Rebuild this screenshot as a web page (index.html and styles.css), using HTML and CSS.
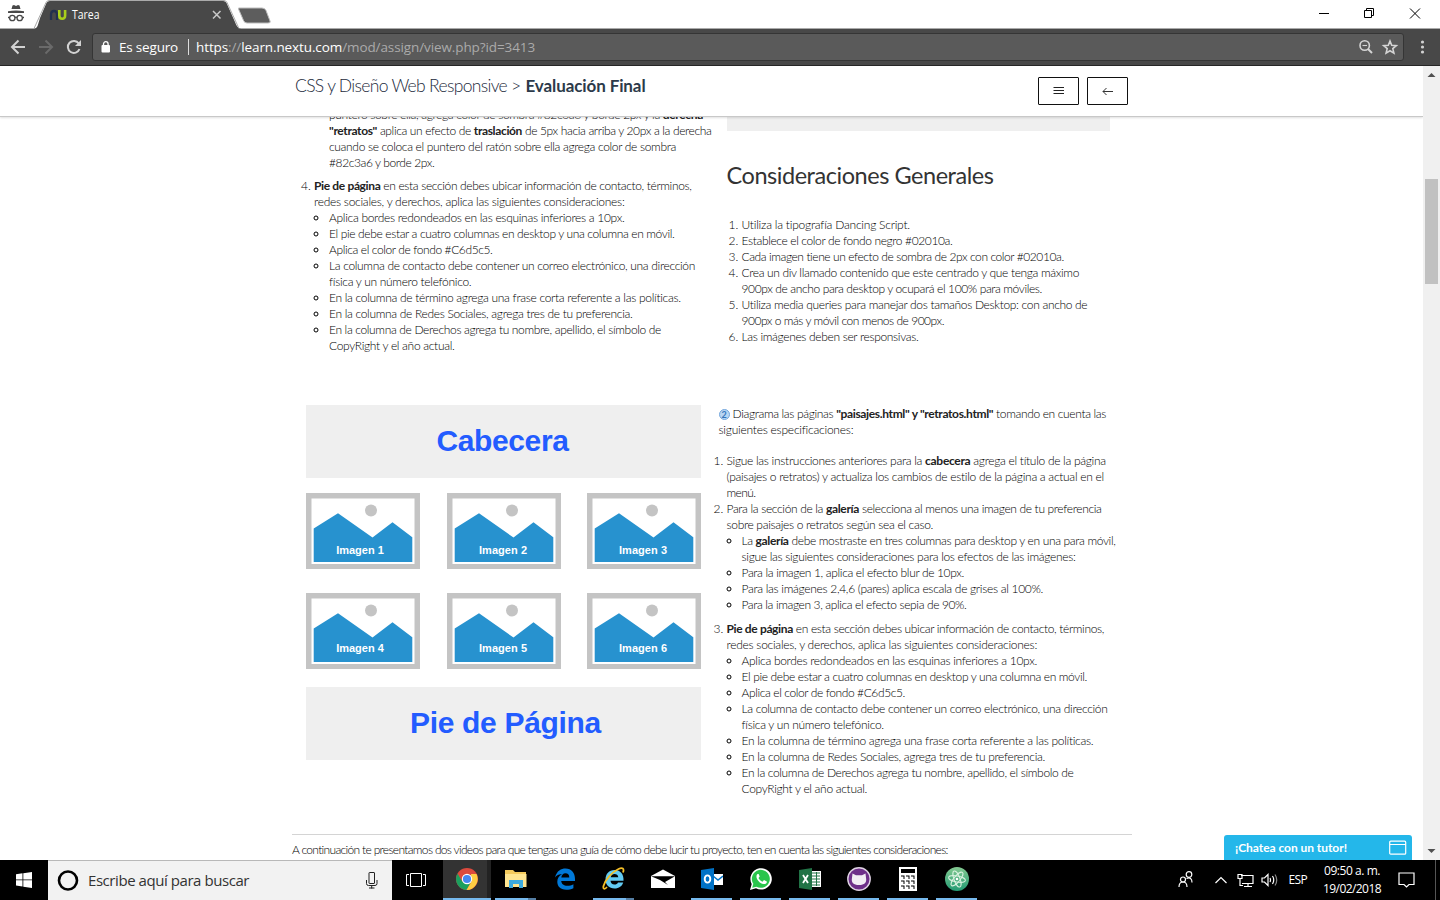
FILE: index.html
```html
<!DOCTYPE html>
<html lang="es">
<head>
<meta charset="utf-8">
<title>Tarea</title>
<link rel="stylesheet" href="styles.css">
</head>
<body>
<svg class="defs" width="0" height="0">
  <symbol id="thumb" viewBox="0 0 114 76">
    <rect width="114" height="76" fill="#c4c4c4"/>
    <rect x="5.5" y="5.5" width="103" height="65.5" fill="#fff"/>
    <circle cx="65" cy="17.5" r="6" fill="#c4c4c4"/>
    <path d="M7.7 35.5 32 20.3 66.5 44.5 86.5 29.3 106.3 44.3V69H7.7z" fill="#2792cf"/>
  </symbol>
</svg>

<div class="tabstrip">
  <svg class="tabs" width="290" height="29" viewBox="0 0 290 29">
    <path d="M34 29C38 28 38 24 40 18L46 4Q47 1 50 1H223Q226 1 227 4L235 22Q237 28 241 29z" fill="#484848"/>
    <path d="M34 28.5 46 2.5Q47 .5 49 .5H224Q226 .5 227 2.500L239 28.500" fill="none" stroke="#aaa"/>
    <path d="M238.500 8H262Q265 8 266 10.500L270 21Q271 23 268 23H247Q244.500 23 243.500 20.500L238.500 9z" fill="#5d5d5d" stroke="#bdbdbd"/>
    <g fill="#484848"><path d="M12.500 5.500 14 5 16 6 18 5 19.500 5.500 20.500 9h-9zM8 11.300Q16 9.500 24 11.300V13H8z"/></g>
    <g fill="none" stroke="#484848" stroke-width="1.300"><circle cx="12.300" cy="18" r="2.700"/><circle cx="19.700" cy="18" r="2.700"/><path d="M15 17.500q1-.7 2 0M9 17.500H8M23 17.500h1"/></g>
    <path d="M51 20v-5q0-4 3-4t3 4v5" fill="none" stroke="#22304f" stroke-width="2.300"/>
    <path d="M59.300 10v5.500q0 3.300 2.900 3.300t2.900-3.300V10" fill="none" stroke="#a9cf1b" stroke-width="2.600"/>
    <path d="m213 11 7.500 7.500m0-7.500-7.500 7.500" stroke="#c9c9c9" stroke-width="1.500"/>
    <text x="72" y="19" class="tab-title" textLength="27.500" lengthAdjust="spacingAndGlyphs">Tarea</text>
  </svg>
  <svg class="winctl" width="120" height="28" viewBox="0 0 120 28" fill="none" stroke="#000">
    <path d="M-1 13.500h10M44.500 10.500h7v7h-7zM46.500 10.500v-2h7v7h-2M90 8.500l10 10m0-10-10 10"/>
  </svg>
</div>

<div class="toolbar">
  <svg class="nav" width="92" height="36" viewBox="0 0 92 36" fill="none" stroke="#d2d2d2" stroke-width="2">
    <path d="M25 18H12M18.500 11.500 12 18l6.500 6.500"/>
    <path d="M39 18h13M45.500 11.500 52 18l-6.500 6.500" stroke="#6a6a6a"/>
    <path d="M78.800 14.500A6 6 0 1 0 79.500 20"/><path d="M81 11v6h-6z" fill="#d2d2d2" stroke="none"/>
  </svg>
  <div class="omnibox">
    <svg width="12" height="14" viewBox="0 0 12 14"><rect x="1.500" y="5" width="8.500" height="7.500" rx="1" fill="#fff"/><path d="M3.500 6V4a2.300 2.300 0 0 1 4.600 0v2" fill="none" stroke="#fff" stroke-width="1.300"/></svg>
    <span class="secure"><span class="fit" data-w="59">Es seguro</span></span>
    <span class="url"><span class="fit" data-w="339">https<i>://</i>learn.nextu.com<i>/mod/assign/view.php?id=3413</i></span></span>
    <svg class="omni-icons" width="42" height="16" viewBox="0 0 42 16" fill="none" stroke="#d4d4d4" stroke-width="1.600"><circle cx="6.700" cy="6.500" r="4.700"/><path d="m10 10 4 4" stroke-width="2"/><path d="M4.500 6.500h4.500" stroke-width="1.100"/><path d="m32 2 1.700 4.300 4.600.3-3.500 3 1.100 4.500-3.900-2.400-3.900 2.400 1.100-4.500-3.500-3 4.600-.3z"/></svg>
  </div>
  <svg class="menu" width="24" height="36" viewBox="0 0 24 36" fill="#d2d2d2"><circle cx="6.500" cy="13" r="1.600"/><circle cx="6.500" cy="18" r="1.600"/><circle cx="6.500" cy="23" r="1.600"/></svg>
</div>

<div class="viewport">
  <div class="page">
    <header class="course">
      <div class="crumbs"><span class="fit" data-w="225.500">CSS y Diseño Web Responsive &gt;</span><span class="fit current" data-w="120">Evaluación Final</span></div>
      <div class="btn"><svg width="12" height="12" viewBox="0 0 12 12" stroke="#222"><path d="M.5 2.500h10.500M.5 5.500h10.500M.5 8.500h10.500"/></svg></div>
      <div class="btn"><svg width="12" height="12" viewBox="0 0 12 12" fill="none" stroke="#333"><path d="M11 6.500H1M4.500 3 1 6.500 4.500 10"/></svg></div>
    </header>
    <main class="content">
      <div class="row first">
        <section class="col-left">
          <ul class="cont">
            <li><span class="fit" data-w="374">puntero sobre ella, agrega color de sombra #82c3a6 y borde 2px y la <b>derecha</b></span>
            <span class="fit" data-w="382.500"><b>"retratos"</b> aplica un efecto de <b>traslación</b> de 5px hacia arriba y 20px a la derecha</span>
            <span class="fit" data-w="347">cuando se coloca el puntero del ratón sobre ella agrega color de sombra</span>
            <span class="fit" data-w="105.500">#82c3a6 y borde 2px.</span></li>
          </ul>
          <ol start="4">
            <li><span class="fit" data-w="377.500"><b>Pie de página</b> en esta sección debes ubicar información de contacto, términos,</span>
            <span class="fit" data-w="310.500">redes sociales, y derechos, aplica las siguientes consideraciones:</span>
              <ul>
                <li><span class="fit" data-w="295.500">Aplica bordes redondeados en las esquinas inferiores a 10px.</span></li>
                <li><span class="fit" data-w="345.500">El pie debe estar a cuatro columnas en desktop y una columna en móvil.</span></li>
                <li><span class="fit" data-w="163.500">Aplica el color de fondo #C6d5c5.</span></li>
                <li><span class="fit" data-w="366">La columna de contacto debe contener un correo electrónico, una dirección</span>
                <span class="fit" data-w="142">física y un número telefónico.</span></li>
                <li><span class="fit" data-w="352">En la columna de término agrega una frase corta referente a las políticas.</span></li>
                <li><span class="fit" data-w="303.500">En la columna de Redes Sociales, agrega tres de tu preferencia.</span></li>
                <li><span class="fit" data-w="332">En la columna de Derechos agrega tu nombre, apellido, el símbolo de</span>
                <span class="fit" data-w="125.500">CopyRight y el año actual.</span></li>
              </ul>
            </li>
          </ol>
        </section>
        <section class="col-right">
          <div class="block-end"></div>
          <h2><span class="fit" data-w="267">Consideraciones Generales</span></h2>
          <ol>
            <li><span class="fit" data-w="168.500">Utiliza la tipografía Dancing Script.</span></li>
            <li><span class="fit" data-w="211">Establece el color de fondo negro #02010a.</span></li>
            <li><span class="fit" data-w="322.500">Cada imagen tiene un efecto de sombra de 2px con color #02010a.</span></li>
            <li><span class="fit" data-w="337.500">Crea un div llamado contenido que este centrado y que tenga máximo</span>
            <span class="fit" data-w="300.500">900px de ancho para desktop y ocupará el 100% para móviles.</span></li>
            <li><span class="fit" data-w="346">Utiliza media queries para manejar dos tamaños Desktop: con ancho de</span>
            <span class="fit" data-w="202.500">900px o más y móvil con menos de 900px.</span></li>
            <li><span class="fit" data-w="177">Las imágenes deben ser responsivas.</span></li>
          </ol>
        </section>
      </div>
      <div class="row second">
        <section class="mock">
          <div class="band"><span class="fit" data-w="132">Cabecera</span></div>
          <div class="thumbs">
            <svg viewBox="0 0 114 76"><use href="#thumb"/><text x="54" y="61" textLength="47.500">Imagen 1</text></svg>
            <svg viewBox="0 0 114 76"><use href="#thumb"/><text x="56" y="61" textLength="48">Imagen 2</text></svg>
            <svg viewBox="0 0 114 76"><use href="#thumb"/><text x="56" y="61" textLength="48">Imagen 3</text></svg>
            <svg viewBox="0 0 114 76"><use href="#thumb"/><text x="54" y="59" textLength="47.500">Imagen 4</text></svg>
            <svg viewBox="0 0 114 76"><use href="#thumb"/><text x="56" y="59" textLength="48">Imagen 5</text></svg>
            <svg viewBox="0 0 114 76"><use href="#thumb"/><text x="56" y="59" textLength="48">Imagen 6</text></svg>
          </div>
          <div class="band foot"><span class="fit" data-w="191">Pie de Página</span></div>
        </section>
        <section class="task">
          <p><span class="lead"><span class="num">2</span><span class="fit" data-w="373.500">Diagrama las páginas <b>"paisajes.html" y "retratos.html"</b> tomando en cuenta las</span></span>
          <span class="fit" data-w="134.500">siguientes especificaciones:</span></p>
          <ol>
            <li><span class="fit" data-w="379.500">Sigue las instrucciones anteriores para la <b>cabecera</b> agrega el título de la página</span>
            <span class="fit" data-w="377.500">(paisajes o retratos) y actualiza los cambios de estilo de la página a actual en el</span>
            <span class="fit" data-w="29">menú.</span></li>
            <li><span class="fit" data-w="375">Para la sección de la <b>galería</b> selecciona al menos una imagen de tu preferencia</span>
            <span class="fit" data-w="206.500">sobre paisajes o retratos según sea el caso.</span>
              <ul>
                <li><span class="fit" data-w="374">La <b>galería</b> debe mostraste en tres columnas para desktop y en una para móvil,</span>
                <span class="fit" data-w="334">sigue las siguientes consideraciones para los efectos de las imágenes:</span></li>
                <li><span class="fit" data-w="222.500">Para la imagen 1, aplica el efecto blur de 10px.</span></li>
                <li><span class="fit" data-w="301.500">Para las imágenes 2,4,6 (pares) aplica escala de grises al 100%.</span></li>
                <li><span class="fit" data-w="225">Para la imagen 3, aplica el efecto sepia de 90%.</span></li>
              </ul>
            </li>
            <li class="gap"><span class="fit" data-w="377.500"><b>Pie de página</b> en esta sección debes ubicar información de contacto, términos,</span>
            <span class="fit" data-w="310.500">redes sociales, y derechos, aplica las siguientes consideraciones:</span>
              <ul>
                <li><span class="fit" data-w="295.500">Aplica bordes redondeados en las esquinas inferiores a 10px.</span></li>
                <li><span class="fit" data-w="345.500">El pie debe estar a cuatro columnas en desktop y una columna en móvil.</span></li>
                <li><span class="fit" data-w="163.500">Aplica el color de fondo #C6d5c5.</span></li>
                <li><span class="fit" data-w="366">La columna de contacto debe contener un correo electrónico, una dirección</span>
                <span class="fit" data-w="142">física y un número telefónico.</span></li>
                <li><span class="fit" data-w="352">En la columna de término agrega una frase corta referente a las políticas.</span></li>
                <li><span class="fit" data-w="303.500">En la columna de Redes Sociales, agrega tres de tu preferencia.</span></li>
                <li><span class="fit" data-w="332">En la columna de Derechos agrega tu nombre, apellido, el símbolo de</span>
                <span class="fit" data-w="125.500">CopyRight y el año actual.</span></li>
              </ul>
            </li>
          </ol>
        </section>
      </div>
      <div class="after"><span class="fit" data-w="656">A continuación te presentamos dos videos para que tengas una guía de cómo debe lucir tu proyecto, ten en cuenta las siguientes consideraciones:</span></div>
    </main>
    <div class="chat"><span class="fit" data-w="112">¡Chatea con un tutor!</span>
      <svg width="18" height="16" viewBox="0 0 18 16" fill="none" stroke="#fff"><rect x=".7" y="1.200" width="16" height="13" rx="1" stroke-width="1.200"/><path d="M1 4.500h16"/></svg>
    </div>
  </div>
  <div class="scrollbar">
    <svg width="17" height="17" viewBox="0 0 17 17"><path d="m4.500 11 4-4 4 4z" fill="#505050"/></svg>
    <div class="thumb"></div>
    <svg class="down" width="17" height="17" viewBox="0 0 17 17"><path d="m4.500 6 4 4 4-4z" fill="#505050"/></svg>
  </div>
</div>

<div class="taskbar">
  <div class="start"><svg width="16" height="16" viewBox="0 0 16 16" fill="#fff"><path d="M0 2.200 6.500 1.300v6.200H0zM7.300 1.200 16 0v7.500H7.300zM0 8.300h6.500v6.200L0 13.600zM7.300 8.300H16V16l-8.700-1.300z"/></svg></div>
  <div class="search">
    <svg width="22" height="22" viewBox="0 0 22 22"><circle cx="11" cy="10.500" r="9" fill="none" stroke="#000" stroke-width="2.600"/></svg>
    <span class="search-text"><span class="fit" data-w="161">Escribe aquí para buscar</span></span>
    <svg class="mic" width="12" height="17" viewBox="0 0 12 17" fill="none" stroke="#222"><rect x="3" y=".5" width="5.500" height="11" rx=".5"/><path d="M.5 8v3.500q0 2 2 2h6.500q2 0 2-2V8M5.700 13.500v3M3 16h5.500"/></svg>
  </div>
  <div class="view"><svg width="20" height="16" viewBox="0 0 20 16" fill="none" stroke="#fff"><path d="M4.500 1.500h11v13h-11zM3 2.500H.5v11H3M17 2.500h2.500v11H17"/></svg></div>
  <div class="app active"><svg width="22" height="22" viewBox="0 0 22 22"><circle cx="11" cy="11" r="11" fill="#dc4a3e"/><path d="M1.500 5.500A11 11 0 0 0 10.500 22L15.300 13.500 6.200 13.500z" fill="#1ba05e"/><path d="M20.500 6A11 11 0 0 1 10.500 22L15.500 13.500 15 6z" fill="#ffcd42"/><circle cx="11" cy="11" r="5.200" fill="#fff"/><circle cx="11" cy="11" r="4.100" fill="#4587f3"/></svg></div>
  <div class="app on stack"><svg width="22" height="20" viewBox="0 0 22 20"><path d="M0 1h8l2 2h11v15H0z" fill="#f4ca5c"/><path d="M0 5h21.500v13H0z" fill="#ffe590"/><path d="M4 19v-8h14v8h-4v-4H8v4z" fill="#3cabdf"/></svg></div>
  <div class="app"><svg width="22" height="22" viewBox="0 0 22 22"><path d="M1 9.500C3 2.500 7 .5 11.500.5 17.500.5 21 5 21 11v2H7.200c.3 3.200 2.800 4.800 6 4.800 2.600 0 4.400-.6 6.200-1.600v4c-2.300 1.200-4.700 1.600-7.100 1.600C6 21.800 3.300 18 3.300 13.800c0-3.400 1.800-5.900 4.700-7.500C4.500 6 2.500 7.300 1 9.500zM7.300 9.500h8c0-3-1.500-4.300-3.800-4.300-2.400 0-3.800 1.700-4.200 4.300z" fill="#0078d7"/></svg></div>
  <div class="app on stack"><svg width="24" height="24" viewBox="0 0 24 24"><path d="M12.500 3C7 3 3.500 7 3.500 12.500s3.700 9 9 9c4.500 0 7.700-2.400 8.700-6H16c-.7 1.500-1.800 2-3.500 2-2.400 0-3.800-1.500-4-3.700h13C22 7.500 18.500 3 12.500 3zM8.700 10.300c.5-2.200 1.900-3.300 3.900-3.300s3.400 1.100 3.700 3.300z" fill="#62caf2"/><path d="M5 20C2.500 23 .8 22 1.500 19 3 13 10 5 16.500 2c4-1.800 6-.5 4.500 3.500" fill="none" stroke="#f4bf28" stroke-width="1.800"/></svg></div>
  <div class="app"><svg width="24" height="20" viewBox="0 0 24 20"><path d="M0 7 12 .5 24 7v12H0z" fill="#fff"/><path d="M0 7.200h24L14 13l3 3-8-5z" fill="#000"/></svg></div>
  <div class="app on"><svg width="22" height="22" viewBox="0 0 22 22"><path d="M12 6h10v11H12z" fill="#fff"/><path d="m12 8 5 4 5-4" fill="none" stroke="#0072c6" stroke-width="1.500"/><path d="M0 2 13 0v22L0 20z" fill="#0072c6"/><ellipse cx="6.500" cy="11" rx="2.800" ry="3.600" fill="none" stroke="#fff" stroke-width="1.900"/></svg></div>
  <div class="app on"><svg width="22" height="22" viewBox="0 0 22 22"><path d="M0 22 1.700 16A10.700 10.700 0 1 1 6 20.300z" fill="#fff"/><path d="m2.200 19.800 1.100-4A9 9 0 1 1 6.400 18.700z" fill="#29c54c"/><path d="M7.500 6c-3 2.500.8 9 6 10 2 .3 3.800-1.200 3.300-2.500L14 12l-1.500 1.700C10.500 13 9 11.300 8.500 10L9.700 8.500 8.600 6z" fill="#fff"/></svg></div>
  <div class="app on"><svg width="22" height="22" viewBox="0 0 22 22"><path d="M12 3h10v16H12z" fill="#fff"/><path d="M13 5h8M13 8h8M13 11h8M13 14h8M13 17h8M17.500 4v14" stroke="#217346"/><path d="M0 2 13 0v22L0 20z" fill="#217346"/><path d="m4 7 5 8m0-8-5 8" stroke="#fff" stroke-width="1.800"/></svg></div>
  <div class="app on"><svg width="24" height="24" viewBox="0 0 24 24"><circle cx="12" cy="12" r="11.200" fill="#6e3089" stroke="#ded2e2" stroke-width="1.400"/><path d="M5.500 6.500 9 8.200h6l3.500-1.700.5 4.200c1 5-1.500 7.300-7 7.300s-8-2.300-7-7.300z" fill="#f2eef4"/></svg></div>
  <div class="app on"><svg width="18" height="24" viewBox="0 0 18 24"><path d="M0 0h18v24H0z" fill="#fff"/><path d="M2 2h14v4H2zM2 8.500h3.500V12h-1V9.500H2zM7 8.500h3.500V12h-1V9.500H7zM12 8.500h3.500V12h-1V9.500H12zM2 13.500h3.500V17h-1v-2.500H2zM7 13.500h3.500V17h-1v-2.500H7zM12 13.500h3.500V17h-1v-2.500H12zM2 18.500h3.500V22h-1v-2.500H2zM7 18.500h3.500V22h-1v-2.500H7zM12 18.500h3.500V22h-1v-2.500H12z"/></svg></div>
  <div class="app on"><svg width="24" height="24" viewBox="0 0 24 24"><defs><linearGradient id="ag" x2="0" y2="1"><stop stop-color="#84c991"/><stop offset="1" stop-color="#229b73"/></linearGradient></defs><circle cx="12" cy="12" r="12" fill="url(#ag)"/><g fill="none" stroke="#d9f1df"><ellipse cx="12" cy="12" rx="3" ry="8.500" transform="rotate(-20 12 12)"/><ellipse cx="12" cy="12" rx="3" ry="8.500" transform="rotate(40 12 12)"/><ellipse cx="12" cy="12" rx="3" ry="8.500" transform="rotate(100 12 12)"/></g><circle cx="12" cy="12" r="1.300" fill="#fff"/></svg></div>
  <div class="tray">
    <svg width="108" height="20" viewBox="0 0 108 20" fill="none" stroke="#fff" stroke-width="1.200"><circle cx="6" cy="9.500" r="2.500"/><path d="M2 17q0-5 4-5t4 5"/><circle cx="12" cy="4.500" r="2.800"/><path d="M9.500 8.500Q15 6.500 15 12.500M38.500 13l5.500-5.500 5.500 5.500M64 5.500h12v8H65M71 13.500v3M67 16.500h8M61 4.500h4v4h-4zM63 8.500v7h3M85 8h2.500L91 4.500v11L87.500 12H85zM93 8q1 2 0 4M95.500 6q2.500 4 0 8"/><path d="M98 4.500q3.500 5.500 0 11" stroke="#888"/></svg>
    <span class="lang"><span class="fit" data-w="18.500">ESP</span></span>
    <div class="clock"><span class="fit" data-w="56">09:50 a. m.</span><span class="fit" data-w="58">19/02/2018</span></div>
    <svg class="note" width="18" height="18" viewBox="0 0 18 18" fill="none" stroke="#fff" stroke-width="1.200"><path d="M1 2h15v11.500h-5L8.500 16 6 13.500H1z"/></svg>
    <div class="edge"></div>
  </div>
</div>
<script src="fit.js"></script>
</body>
</html>
```
FILE: styles.css
```css
* { box-sizing: border-box; }
body { margin: 0; width: 1440px; height: 900px; overflow: hidden; display: flex; flex-direction: column; background: #fff; font-family: "Open Sans", sans-serif; }
.defs { position: absolute; }
svg { display: block; flex: none; }
.fit { display: inline-block; white-space: nowrap; }

.tabstrip { height: 29px; flex: none; display: flex; justify-content: space-between; border-bottom: 1px solid #aaa; }
.tabs { height: 29px; overflow: visible; }
.tab-title { font: 12px "Open Sans", sans-serif; fill: #fff; }
.winctl { overflow: visible; }
.toolbar { height: 37px; flex: none; display: flex; background: #484848; border-bottom: 1px solid #262626; }
.omnibox { width: 1312px; height: 28px; margin-top: 4px; border: 1px solid #353535; border-radius: 3px; background: #5a5a5a; display: flex; align-items: center; padding-left: 7px; color: #fff; font-size: 13.5px; }
.secure { margin-left: 7px; width: 70px; height: 16px; line-height: 16px; border-right: 1px solid #ddd; }
.url { margin-left: 7px; line-height: 16px; }
.url i { font-style: normal; color: #aaa; }
.omni-icons { margin-left: auto; margin-right: 3px; }
.menu { margin-left: 12px; }

.viewport { height: 794px; flex: none; display: flex; }
.page { width: 1423px; position: relative; overflow: hidden; font: 300 12px/16px Lato, sans-serif; color: #000; }
.page b { font-weight: 700; color: #222; }
.course { height: 51px; padding-left: 295px; display: flex; align-items: flex-start; background: #fff; border-bottom: 1px solid #c8c8c8; box-shadow: 0 1px 2px rgba(0,0,0,.12); position: relative; }
.crumbs { width: 743px; padding-top: 8px; font-size: 17.5px; line-height: 24px; color: #1c2a3c; display: flex; }
.current { font-weight: 700; font-size: 17px; margin-left: 5px; color: #2c3a4a; }
.btn { width: 41px; height: 28px; margin: 11px 8px 0 0; border: 1px solid #111; border-radius: 1px; display: flex; align-items: center; justify-content: center; }
.content { width: 840px; margin: -10px 0 0 292px; }
.row { display: flex; }
.first { height: 298px; }
.row .fit { display: block; width: max-content; }
ul, ol { margin: 0; padding: 0; }
ul ul, ol ul { padding-left: 15px; list-style: circle; }
.col-left { width: 434.5px; padding-left: 22px; }
.cont { list-style: none; padding-left: 15px; margin-bottom: 7px; }
.block-end { width: 383px; height: 24px; background: #efefef; }
h2 { margin: 29px 0 0; height: 57px; font: 400 23.5px/30px Lato, sans-serif; color: #333; }
.col-right ol { padding-left: 15px; }
.mock { width: 395px; margin-left: 14px; }
.band { height: 73px; background: #efefef; display: flex; align-items: center; justify-content: center; font: bold 30px/34px "Liberation Sans", sans-serif; color: #235cff; padding: 0 2px 2px 0; }
.foot { padding: 0 0 2px 4px; }
.thumbs { display: grid; grid-template-columns: 114px 114px 114px; justify-content: space-between; row-gap: 24px; margin: 15px 0 18px; }
.thumbs svg { width: 114px; height: 76px; }
.thumbs text { font: bold 11px "Liberation Sans", sans-serif; fill: #fff; text-anchor: middle; }
.second { height: 429px; }
.task { margin-left: 17.5px; padding-top: 1px; }
.task p { margin: 0 0 15px; }
.task ol { padding-left: 8px; }
.gap { margin-top: 8px; }
.lead { display: flex; align-items: center; }
.num { width: 11px; height: 11px; border: 1px solid #74a7dd; border-radius: 50%; background: #b9d6f3; color: #3476bd; font: 700 9px/9px Lato, sans-serif; text-align: center; margin-right: 3px; }
.after { border-top: 1px solid #d4d4d4; padding-top: 7px; color: #000; }
.chat { position: absolute; left: 1224px; bottom: 0; width: 188px; height: 25px; border-radius: 3px 3px 0 0; background: #24b7ea; color: #fff; font-weight: 700; display: flex; align-items: center; justify-content: space-between; padding: 0 5px 0 11px; }
.scrollbar { width: 17px; background: #f0f0f0; display: flex; flex-direction: column; }
.thumb { width: 13px; height: 105px; margin: 96px 0 0 2px; background: #c1c1c1; }
.down { margin-top: auto; }

.taskbar { height: 40px; flex: none; background: #000; display: flex; color: #fff; }
.start, .view, .app { display: flex; align-items: center; justify-content: center; }
.start { width: 48px; }
.search { width: 344px; background: #f2f2f2; border-top: 1px solid #b8b8b8; display: flex; align-items: center; padding-left: 9px; color: #333; font-size: 15px; }
.search-text { margin-left: 9px; width: 278px; padding-bottom: 2px; }
.view { width: 51px; padding-right: 3px; }
.app { width: 49px; height: 40px; border-bottom: 2px solid transparent; }
.on { width: 41px; margin: 0 4px; border-color: #76b9ed; }
.stack { border-image: linear-gradient(90deg, #76b9ed 78%, #557fa5 78%) 2; border-width: 0 0 2px; border-style: solid; }
.active { width: 48px; padding-right: 1px; background: linear-gradient(90deg, #333 44px, #222 44px); border-color: #76b9ed; }
.tray { margin-left: auto; width: 263.5px; display: flex; align-items: center; }
.lang { font-size: 12px; margin: 0 0 2px 4px; width: 33.5px; }
.clock { width: 60px; display: flex; flex-direction: column; align-items: center; font-size: 12px; line-height: 18px; }
.note { margin-left: 16px; }
.edge { margin-left: auto; width: 5px; height: 40px; border-left: 1px solid #555; }
```
FILE: fit.js
```js
// Tracks each line of text out or in to the measure given in its data-w attribute.
document.querySelectorAll('.fit').forEach(function (el) {
  var natural = el.getBoundingClientRect().width;
  var count = el.textContent.length;
  el.style.letterSpacing = ((parseFloat(el.dataset.w) - natural) / count) + 'px';
});
```
